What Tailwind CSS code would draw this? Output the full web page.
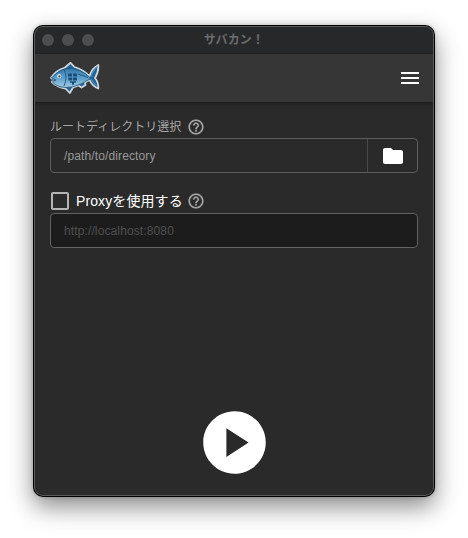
<!DOCTYPE html>
<html lang="ja">
<head>
<meta charset="utf-8">
<title>サバカン！</title>
<script src="https://cdn.jsdelivr.net/npm/@tailwindcss/browser@4"></script>
</head>
<body class="h-[538px] w-[468px] overflow-hidden bg-white pt-[25px] pl-[33px] font-['Liberation_Sans','Noto_Sans_CJK_JP',sans-serif]">
<div class="h-[472px] w-[402px] rounded-[10px] bg-black p-px shadow-[0_10px_25px_rgba(0,0,0,0.46),0_0_4px_rgba(0,0,0,0.2)]">
<main class="relative flex h-full flex-col overflow-hidden rounded-[9px] bg-[#2a2a2a]">
  <header class="relative flex h-7 shrink-0 items-center justify-center bg-[#262829]">
    <div class="absolute left-2 flex gap-2">
      <span class="size-3 rounded-full bg-[#4c4d4e]"></span>
      <span class="size-3 rounded-full bg-[#4c4d4e]"></span>
      <span class="size-3 rounded-full bg-[#4c4d4e]"></span>
    </div>
    <h1 class="text-[12px] leading-7 font-bold tracking-[0.2px] text-[#6b6c6d]">サバカン！</h1>
  </header>
  <nav class="z-10 flex h-12 shrink-0 items-center justify-between bg-[#363636] pr-3 pl-4 shadow-[0_1px_4px_rgba(0,0,0,0.45)]">
    <svg class="h-8 w-[50px]" viewBox="0 0 50 32">
      <defs><linearGradient id="body" x2="0" y2="1"><stop stop-color="#3478aa"/><stop offset=".5" stop-color="#5b9fcb"/><stop offset="1" stop-color="#a3cde3"/></linearGradient></defs>
      <path d="M1 16 Q6 8 15 5.500 L20.500 .8 L24.500 5 Q33 7.500 39.500 14 Q42 6 48.300 3 Q48.800 10 45 16 Q48.500 20 48.300 26.500 Q42 24 39.500 18 L35 20.500 L35.500 23 L31.500 25.500 L28.500 23.500 L23 25.500 L19.800 31 L15.500 26.500 Q7 25.500 1.800 20 L4 18Z" fill="#236391" stroke="#cbd6dc" stroke-width="1.800" stroke-linejoin="round"/>
      <path d="M1.500 16 Q9 7 20 6.300 Q31 7 40 15.500 L40 17 Q32 22.500 22 25 Q8 27 2.500 20 L5.500 18Z" fill="url(#body)" stroke="#1d527a" stroke-width=".8"/>
      <path d="M41 15 Q43 8 47.500 4.500M41 17 Q44 21 47 25" fill="none" stroke="#4c91bd" stroke-width="1.200"/>
      <path d="M2 18 L6 18.200M14 7.500 Q18 15 14 24M28 12 L38 15.500" fill="none" stroke="#225c88" stroke-width="1"/>
      <circle cx="9.200" cy="14.200" r="2.100" fill="#dcebf0"/><circle cx="9.400" cy="14.400" r="1.100" fill="#1d4c6d"/>
      <path d="M18 11.500h4v3h-4zM23 11.500h4v3h-4zM18.300 15.500h4v3h-4zM23 15.500h4v3h-4zM20 19.300h6v1.400h-6zM22 20.500h2v2.200h-2z" fill="#1b4d78"/>
    </svg>
    <svg class="size-6 fill-white" viewBox="0 0 24 24"><path d="M3 18h18v-2H3v2zm0-5h18v-2H3v2zm0-7v2h18V6H3z"/></svg>
  </nav>
  <section class="flex flex-1 flex-col px-4 pt-4">
    <div class="flex h-[18px] items-center gap-[5px] text-[12px] leading-[18px] text-[#a6a6a6]">
      <span class="w-[132px] whitespace-nowrap">ルートディレクトリ選択</span>
      <svg class="size-[18px] shrink-0 fill-current stroke-current stroke-[0.3]" viewBox="0 0 24 24"><path d="M11 18h2v-2h-2v2zm1-16C6.48 2 2 6.48 2 12s4.48 10 10 10 10-4.48 10-10S17.52 2 12 2zm0 18c-4.41 0-8-3.59-8-8s3.59-8 8-8 8 3.59 8 8-3.59 8-8 8zm0-14c-2.21 0-4 1.79-4 4h2c0-1.1.9-2 2-2s2 .9 2 2c0 2-3 1.75-3 5h2c0-2.25 3-2.5 3-5 0-2.21-1.79-4-4-4z"/></svg>
    </div>
    <div class="mt-[2px] flex h-[35px] rounded-[4px] border border-[#5d5d5d]">
      <span class="flex-1 pl-[13px] text-[12px] leading-[34px] tracking-[0.12px] text-[#999]">/path/to/directory</span>
      <div class="flex w-[50px] items-center justify-center border-l border-[#484848] pl-px">
        <svg class="size-6 fill-white" viewBox="0 0 24 24"><path d="M10 4H4c-1.1 0-1.99.9-1.99 2L2 18c0 1.1.9 2 2 2h16c1.1 0 2-.9 2-2V8c0-1.1-.9-2-2-2h-8l-2-2z"/></svg>
      </div>
    </div>
    <div class="-ml-0.5 mt-4 flex h-6 items-center">
      <svg class="size-6 fill-[#b4b4b4]" viewBox="0 0 24 24"><path d="M19 5v14H5V5h14m0-2H5c-1.1 0-2 .9-2 2v14c0 1.1.9 2 2 2h14c1.1 0 2-.9 2-2V5c0-1.1-.9-2-2-2z"/></svg>
      <span class="ml-1 w-[111px] whitespace-nowrap text-[14px] leading-6 tracking-[0.1px] text-white">Proxyを使用する</span>
      <svg class="size-[18px] shrink-0 fill-[#a6a6a6] stroke-[#a6a6a6] stroke-[0.3]" viewBox="0 0 24 24"><path d="M11 18h2v-2h-2v2zm1-16C6.48 2 2 6.48 2 12s4.48 10 10 10 10-4.48 10-10S17.52 2 12 2zm0 18c-4.41 0-8-3.59-8-8s3.59-8 8-8 8 3.59 8 8-3.59 8-8 8zm0-14c-2.21 0-4 1.79-4 4h2c0-1.1.9-2 2-2s2 .9 2 2c0 2-3 1.75-3 5h2c0-2.25 3-2.5 3-5 0-2.21-1.79-4-4-4z"/></svg>
    </div>
    <div class="h-[35px] rounded-[4px] border border-[#626262] bg-[#1c1c1c] pl-[13px] text-[12px] leading-[34px] tracking-[0.12px] text-[#505050]">http://localhost:8080</div>
    <div class="mt-auto mb-4 flex justify-center">
      <svg class="size-[75px] fill-white" viewBox="0 0 24 24"><path d="M12 2C6.480 2 2 6.480 2 12s4.480 10 10 10 10-4.480 10-10S17.520 2 12 2zm-2.600 14.600v-9.200l7.100 4.600-7.100 4.600z"/></svg>
    </div>
  </section>
  <div class="pointer-events-none absolute inset-0 z-20 rounded-[9px] border border-[#5b5b5b]"></div>
</main>
</div>
</body>
</html>
